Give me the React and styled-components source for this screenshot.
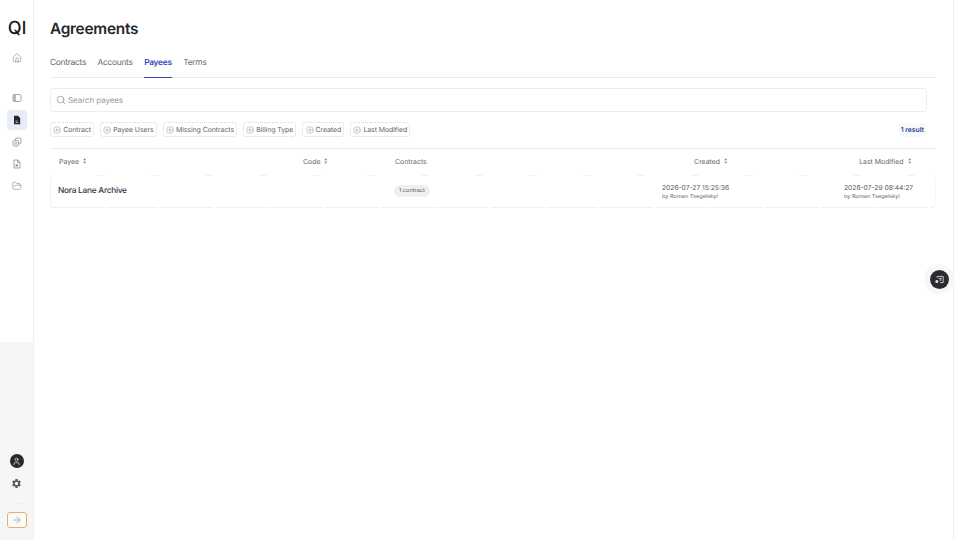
import React from 'react';
import styled, { createGlobalStyle } from 'styled-components';
import { Home, FolderOpen, ArrowRight, Search, CirclePlus, User } from 'lucide-react';
import { MdSettings } from 'react-icons/md';

const GlobalStyle = createGlobalStyle`
  html, body {
    margin: 0;
    padding: 0;
    background: #fff;
    font-family: Inter, "Liberation Sans", sans-serif;
    text-rendering: geometricPrecision;
  }
  * { box-sizing: border-box; }
`;

const Page = styled.div`
  width: 960px;
  height: 540px;
  display: flex;
  overflow: hidden;
  background: #fff;
  position: relative;
`;

const Sidebar = styled.aside`
  width: 34px;
  flex-shrink: 0;
  display: flex;
  flex-direction: column;
  border-right: 1px solid #f0f0f2;
`;

const SidebarTop = styled.div`
  height: 342px;
  display: flex;
  flex-direction: column;
  align-items: center;
`;

const SidebarBottom = styled.div`
  flex: 1;
  background: #f6f6f7;
  display: flex;
  flex-direction: column;
  align-items: center;
  justify-content: flex-end;
  padding-bottom: 12px;
`;

const Logo = styled.div`
  margin: 17px 0 0 1px;
  height: 23px;
  font-size: 18px;
  line-height: 23px;
  font-weight: 500;
  color: #18181b;
`;

const NavItem = styled.div`
  width: 20px;
  height: 20px;
  margin-top: ${({ $gap }) => $gap}px;
  border-radius: 3px;
  display: flex;
  align-items: center;
  justify-content: center;
  color: ${({ $active }) => ($active ? '#27272f' : '#8b8b92')};
  background: ${({ $active }) => ($active ? '#e9ecf8' : 'transparent')};
`;

const Avatar = styled.div`
  width: 14px;
  height: 14px;
  border-radius: 50%;
  background: #27272f;
  color: #e8e8ea;
  display: flex;
  align-items: center;
  justify-content: center;
`;

const GearButton = styled.div`
  margin-top: 8px;
  width: 14px;
  height: 14px;
  color: #55555c;
  display: flex;
  align-items: center;
  justify-content: center;
`;

const Rule = styled.div`
  width: 10px;
  height: 1px;
  margin-top: 13px;
  background: #eeeef1;
`;

const ExpandButton = styled.button`
  margin-top: 8px;
  width: 20px;
  height: 16px;
  padding: 0;
  border: 1px solid #dcb468;
  border-radius: 3px;
  background: #f9f9f9;
  color: #85858b;
  display: flex;
  align-items: center;
  justify-content: center;
`;

const Main = styled.main`
  flex: 1;
  min-width: 0;
  padding: 0 17px 0 16px;
`;

const RightRail = styled.div`
  width: 7px;
  flex-shrink: 0;
  border-left: 1px solid #f0f0f2;
`;

const Title = styled.h1`
  margin: 19px 0 0;
  height: 20px;
  font-size: 15.4px;
  line-height: 20px;
  font-weight: 600;
  letter-spacing: -0.25px;
  color: #27272a;
`;

const Tabs = styled.nav`
  margin-top: 14px;
  height: 25px;
  display: flex;
  gap: 11.5px;
  border-bottom: 1px solid #ececee;
`;

const Tab = styled.div`
  height: 25px;
  padding-top: 4px;
  font-size: 8.4px;
  line-height: 12px;
  letter-spacing: -0.28px;
  font-weight: ${({ $active }) => ($active ? 600 : 400)};
  color: ${({ $active }) => ($active ? '#3349b8' : '#66666d')};
  border-bottom: ${({ $active }) => ($active ? '1px solid #3349b8' : 'none')};
`;

const SearchBox = styled.div`
  margin-top: 10px;
  width: 877px;
  height: 24px;
  border: 1px solid #ececee;
  border-radius: 3px;
  display: flex;
  align-items: center;
  gap: 2px;
  padding-left: 5px;
  color: #77777e;
`;

const SearchText = styled.span`
  font-size: 8px;
  letter-spacing: -0.08px;
  color: #9a9aa0;
`;

const FilterRow = styled.div`
  margin-top: 10px;
  width: 876px;
  height: 15px;
  display: flex;
  align-items: center;
  gap: 6px;
`;

const Chip = styled.div`
  height: 15px;
  padding: 0 2.15px;
  display: flex;
  align-items: center;
  gap: 2px;
  border: 1px dotted #d8d8dc;
  border-radius: 3px;
  font-size: 7px;
  letter-spacing: -0.1px;
  color: #5f5f66;
  white-space: nowrap;
`;

const ResultCount = styled.div`
  margin-left: auto;
  height: 14px;
  padding: 0 2px;
  border-radius: 2px;
  background: #f8f9fc;
  font-size: 6.8px;
  line-height: 14px;
  font-weight: 600;
  color: #2f3f8f;
`;

const Table = styled.div`
  margin-top: 11px;
  border-top: 1px solid #ececee;
`;

const Columns = styled.div`
  display: grid;
  grid-template-columns: 244px 92px 258px 94px 198px;
  align-items: center;
`;

const HeadRow = styled(Columns)`
  height: 26px;
  padding-bottom: 2px;
`;

const HeadCell = styled.div`
  display: flex;
  align-items: center;
  gap: 4px;
  font-size: 6.9px;
  color: #66666d;
  justify-content: ${({ $right }) => ($right ? 'flex-end' : 'flex-start')};
  padding: 0 ${({ $inset }) => $inset || 9}px 0 9px;
`;

const BodyRow = styled(Columns)`
  height: 33px;
  border-left: 1px solid #f3f3f5;
  border-right: 1px solid #f8f8f9;
  border-radius: 3px;
  background:
    repeating-linear-gradient(90deg, transparent 0 46px, #f1f1f3 46px 54px) top / 100% 1px no-repeat,
    repeating-linear-gradient(90deg, #f0f0f2 0 52px, transparent 52px 55px) bottom / 100% 1px no-repeat;
`;

const Cell = styled.div`
  padding: 0 ${({ $inset }) => $inset || 9}px 0 9px;
  display: flex;
  flex-direction: column;
  align-items: ${({ $right }) => ($right ? 'flex-end' : 'flex-start')};
`;

const PayeeName = styled.div`
  margin: -2px 0 0 -2px;
  font-size: 8.4px;
  font-weight: 500;
  letter-spacing: -0.3px;
  color: #3a3a40;
`;

const Badge = styled.span`
  height: 12px;
  padding: 0 5px;
  margin: -1px 0 0 -2px;
  border-radius: 6px;
  background: #efeff1;
  font-size: 5.6px;
  line-height: 12px;
  color: #55555c;
`;

const Stamp = styled.div`
  font-size: 6.7px;
  line-height: 10px;
  color: #55555c;
  white-space: nowrap;
`;

const Author = styled.div`
  font-size: 5.6px;
  line-height: 8px;
  color: #66666d;
  white-space: nowrap;
`;

const StampBlock = styled.div`
  width: 68px;
`;

const FloatingWrap = styled.div`
  position: absolute;
  left: 924px;
  top: 264px;
  width: 30px;
  height: 30px;
  border-radius: 50%;
  background: #f7f7f8;
  display: flex;
  align-items: center;
  justify-content: center;
`;

const FloatingButton = styled.button`
  width: 19px;
  height: 19px;
  padding: 0;
  border: none;
  border-radius: 50%;
  background: #2b2b30;
  color: #e6e6e8;
  display: flex;
  align-items: center;
  justify-content: center;
`;

const filters = ['Contract', 'Payee Users', 'Missing Contracts', 'Billing Type', 'Created', 'Last Modified'];

function SortIcon() {
  return (
    <svg width="3.5" height="6" viewBox="0 0 5 8" fill="#8a8a90">
      <path d="M2.5 0 4.8 3H.2zM2.5 8 .2 5h4.6z" />
    </svg>
  );
}

function PanelIcon() {
  return (
    <svg width="10" height="10" viewBox="0 0 10 10" fill="none" stroke="currentColor" strokeWidth="0.8">
      <rect x="1" y="1.5" width="8" height="7" rx="1.4" />
      <path d="M1.6 2h2.2v6H1.6z" fill="currentColor" fillOpacity="0.7" stroke="none" />
    </svg>
  );
}

function ActiveDocIcon() {
  return (
    <svg width="10" height="10" viewBox="0 0 10 10">
      <path d="M2 .8h4l2.2 2.3v6.1H2z" fill="currentColor" />
      <path d="M3.6 6h1.6M3.6 7.4h2.8" stroke="#e9ecf8" strokeWidth="0.7" />
    </svg>
  );
}

function StackIcon() {
  return (
    <svg width="10" height="10" viewBox="0 0 10 10" fill="none" stroke="currentColor" strokeWidth="0.8">
      <rect x="3.4" y="1" width="5.6" height="5.6" rx="1.4" />
      <rect x="1" y="3.4" width="5.6" height="5.6" rx="1.4" fill="#fff" />
      <path d="M2.4 5.4h2.8M2.4 7h2.8" />
    </svg>
  );
}

function ReportIcon() {
  return (
    <svg width="10" height="10" viewBox="0 0 10 10" fill="none" stroke="currentColor" strokeWidth="0.8">
      <path d="M2 1h3.8L8 3.2V9H2z" strokeLinejoin="round" />
      <path d="M5.6 1v2.4H8" />
      <rect x="3.6" y="5.4" width="2.4" height="2" fill="currentColor" stroke="none" />
    </svg>
  );
}

function PanelFabIcon() {
  return (
    <svg width="11" height="11" viewBox="0 0 11 11" fill="none" stroke="currentColor" strokeWidth="0.8">
      <path d="M3.2 4V2.4h6v6.2H6" />
      <path d="M4.6 4.4h3.2M5.4 6h2.4" />
      <circle cx="2.8" cy="7.6" r="1.5" fill="currentColor" stroke="none" />
    </svg>
  );
}

export default function App() {
  return (
    <Page>
      <GlobalStyle />
      <Sidebar>
        <SidebarTop>
          <Logo>Ql</Logo>
          <NavItem $gap={8}><Home size={10} strokeWidth={1.5} /></NavItem>
          <NavItem $gap={20}><PanelIcon /></NavItem>
          <NavItem $gap={2} $active><ActiveDocIcon /></NavItem>
          <NavItem $gap={2}><StackIcon /></NavItem>
          <NavItem $gap={2}><ReportIcon /></NavItem>
          <NavItem $gap={2}><FolderOpen size={10} strokeWidth={1.5} /></NavItem>
        </SidebarTop>
        <SidebarBottom>
          <Avatar><User size={9} strokeWidth={2} /></Avatar>
          <GearButton><MdSettings size={11} /></GearButton>
          <Rule />
          <ExpandButton><ArrowRight size={10} strokeWidth={1.5} /></ExpandButton>
        </SidebarBottom>
      </Sidebar>

      <Main>
        <Title>Agreements</Title>
        <Tabs>
          <Tab>Contracts</Tab>
          <Tab>Accounts</Tab>
          <Tab $active>Payees</Tab>
          <Tab>Terms</Tab>
        </Tabs>
        <SearchBox>
          <Search size={10} strokeWidth={1.4} />
          <SearchText>Search payees</SearchText>
        </SearchBox>
        <FilterRow>
          {filters.map((name) => (
            <Chip key={name}>
              <CirclePlus size={8} strokeWidth={1.2} color="#77777e" />
              {name}
            </Chip>
          ))}
          <ResultCount>1 result</ResultCount>
        </FilterRow>
        <Table>
          <HeadRow>
            <HeadCell>Payee <SortIcon /></HeadCell>
            <HeadCell>Code <SortIcon /></HeadCell>
            <HeadCell>Contracts</HeadCell>
            <HeadCell $right $inset={10.5}>Created <SortIcon /></HeadCell>
            <HeadCell $right $inset={25}>Last Modified <SortIcon /></HeadCell>
          </HeadRow>
          <BodyRow>
            <Cell><PayeeName>Nora Lane Archive</PayeeName></Cell>
            <Cell />
            <Cell><Badge>1 contract</Badge></Cell>
            <Cell $right>
              <StampBlock>
                <Stamp>2026-07-27 15:25:36</Stamp>
                <Author>by Roman Tsegelskyi</Author>
              </StampBlock>
            </Cell>
            <Cell $right $inset={25}>
              <StampBlock>
                <Stamp>2026-07-29 08:44:27</Stamp>
                <Author>by Roman Tsegelskyi</Author>
              </StampBlock>
            </Cell>
          </BodyRow>
        </Table>
      </Main>

      <RightRail />
      <FloatingWrap>
        <FloatingButton><PanelFabIcon /></FloatingButton>
      </FloatingWrap>
    </Page>
  );
}
